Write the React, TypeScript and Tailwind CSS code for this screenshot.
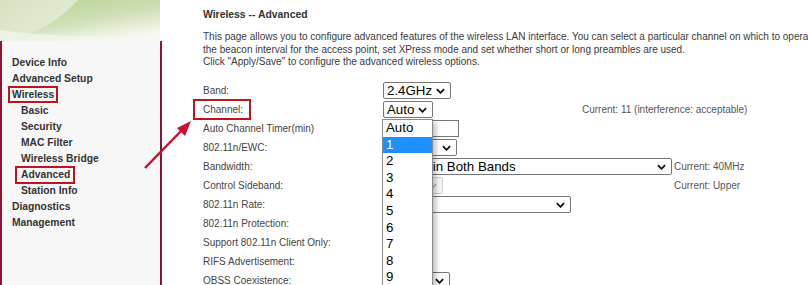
import React from 'react';

const navItems = [
    { label: 'Device Info', sub: false },
    { label: 'Advanced Setup', sub: false },
    { label: 'Wireless', sub: false, box: 'wireless' },
    { label: 'Basic', sub: true },
    { label: 'Security', sub: true },
    { label: 'MAC Filter', sub: true },
    { label: 'Wireless Bridge', sub: true },
    { label: 'Advanced', sub: true, box: 'advanced' },
    { label: 'Station Info', sub: true },
    { label: 'Diagnostics', sub: false },
    { label: 'Management', sub: false },
];

const channels = ['Auto', '1', '2', '3', '4', '5', '6', '7', '8', '9', '10', '11'];

function Chevron({ disabled }: { disabled?: boolean }) {
    return (
        <svg
            className="ml-auto mr-[5px] h-[6px] w-[9px] shrink-0"
            viewBox="0 0 10 6"
            fill="none"
            stroke={disabled ? '#b5b5b5' : '#111'}
            strokeWidth="2"
        >
            <path d="M1 1 L5 5 L9 1" />
        </svg>
    );
}

function Select({
    width,
    text,
    disabled,
    children,
}: {
    width: string;
    text?: string;
    disabled?: boolean;
    children?: React.ReactNode;
}) {
    return (
        <div className={`relative ${width}`}>
            <div
                className={`flex h-[17px] items-center rounded-[2px] border pl-[3px] font-['Liberation_Sans',Arial,sans-serif] text-[13.3px] leading-none ${
                    disabled
                        ? 'border-[#d0d0d0] bg-[#f7f7f7] text-[#9a9a9a]'
                        : 'border-[#767676] bg-white text-black'
                }`}
            >
                {text && <span className="whitespace-nowrap">{text}</span>}
                <Chevron disabled={disabled} />
            </div>
            {children}
        </div>
    );
}

function Row({
    label,
    boxed,
    children,
}: {
    label: string;
    boxed?: boolean;
    children?: React.ReactNode;
}) {
    return (
        <div className="flex h-[19px] items-center">
            <div className="w-[180px] shrink-0">
                <span className="relative">
                    {label}
                    {boxed && (
                        <span className="absolute -left-[10px] -right-[8px] -top-[5px] -bottom-[5px] border-2 border-[#c1121f]"></span>
                    )}
                </span>
            </div>
            <div className="flex items-center">{children}</div>
        </div>
    );
}

function Banner() {
    return (
        <svg className="block h-[41px] w-[162px]" viewBox="0 0 162 41">
            <defs>
                <linearGradient id="bg" x1="0" y1="0" x2="1" y2="0.4">
                    <stop offset="0" stopColor="#d5e3c1" />
                    <stop offset="0.6" stopColor="#e3ecd6" />
                    <stop offset="1" stopColor="#f6f9f1" />
                </linearGradient>
                <linearGradient id="sw" x1="0.3" y1="0" x2="0.9" y2="1">
                    <stop offset="0" stopColor="#bcd49b" />
                    <stop offset="0.45" stopColor="#cfe0b6" />
                    <stop offset="1" stopColor="#ffffff" />
                </linearGradient>
            </defs>
            <rect x="0" y="0" width="160" height="41" fill="url(#bg)" />
            <path d="M78 0 L160 0 L160 41 L8 41 C38 33 62 18 78 0 Z" fill="url(#sw)" />
            <path d="M0 30 C40 36 100 38 160 34 L160 41 L0 41 Z" fill="#f4f7ef" opacity="0.7" />
            <rect x="160" y="0" width="2" height="41" fill="#ffffff" />
        </svg>
    );
}

export default function App() {
    return (
        <div className="relative flex h-[285px] w-[808px] overflow-hidden bg-white font-['Liberation_Sans',Arial,sans-serif]">
            {/* Left menu */}
            <div className="flex w-[162px] shrink-0 flex-col">
                <Banner />
                <div className="flex-1 border-x-2 border-[#8a1538] bg-[#f7f7f7] pt-[14px]">
                    {navItems.map((item) => (
                        <div
                            key={item.label}
                            className={`h-[16px] text-[10.3px] font-bold leading-[16px] text-[#333] ${
                                item.sub ? 'pl-[19px]' : 'pl-[10px]'
                            }`}
                        >
                            <span className="relative">
                                {item.label}
                                {item.box === 'wireless' && (
                                    <span className="absolute -left-[4px] -right-[4px] -top-[3px] -bottom-[3px] border-2 border-[#c1121f]"></span>
                                )}
                                {item.box === 'advanced' && (
                                    <span className="absolute -left-[6px] -right-[5px] -top-[3px] -bottom-[4px] border-2 border-[#c1121f]"></span>
                                )}
                            </span>
                        </div>
                    ))}
                </div>
            </div>

            {/* Content */}
            <div className="flex-1 pl-[41px] pt-[9px] text-[10px] text-[#444]">
                <div className="text-[10.4px] font-bold leading-[12px] text-[#333]">
                    Wireless -- Advanced
                </div>
                <div className="mt-[10px] whitespace-nowrap leading-[12.5px] text-[#3a3a3a]">
                    <div>
                        This page allows you to configure advanced features of the wireless LAN interface. You can select a particular channel on which to operate, force the transmission rate to a particular speed, set the fragmentation threshold,
                    </div>
                    <div>
                        the beacon interval for the access point, set XPress mode and set whether short or long preambles are used.
                    </div>
                    <div>Click "Apply/Save" to configure the advanced wireless options.</div>
                </div>

                <div className="mt-[12.5px] whitespace-nowrap">
                    <Row label="Band:">
                        <Select width="w-[68px]" text="2.4GHz" />
                    </Row>
                    <Row label="Channel:" boxed>
                        <Select width="w-[50px]" text="Auto">
                            <div className="absolute left-[-1px] top-[18px] z-20 w-[51px] border border-[#8a8a8a] bg-white pt-[0px] shadow-[3px_3px_5px_rgba(0,0,0,0.25)]">
                                {channels.map((c) => (
                                    <div
                                        key={c}
                                        className={`h-[16.6px] pl-[3px] text-[13.3px] leading-[16.6px] ${
                                            c === '1' ? 'bg-[#1e8fff] text-white' : 'text-black'
                                        }`}
                                    >
                                        {c}
                                    </div>
                                ))}
                            </div>
                        </Select>
                        <span className="ml-[149px] text-[#555]">Current: 11 (interference: acceptable)</span>
                    </Row>
                    <Row label="Auto Channel Timer(min)">
                        <div className="h-[17px] w-[76px] border border-[#767676] bg-white"></div>
                    </Row>
                    <Row label="802.11n/EWC:">
                        <Select width="w-[74px]" />
                    </Row>
                    <Row label="Bandwidth:">
                        <Select width="w-[289px]" text="40MHz in Both Bands" />
                        <span className="ml-[2px] text-[#555]">Current: 40MHz</span>
                    </Row>
                    <Row label="Control Sideband:">
                        <Select width="w-[60px]" disabled />
                        <span className="ml-[231px] text-[#555]">Current: Upper</span>
                    </Row>
                    <Row label="802.11n Rate:">
                        <Select width="w-[188px]" />
                    </Row>
                    <Row label="802.11n Protection:">
                        <Select width="w-[49px]" />
                    </Row>
                    <Row label="Support 802.11n Client Only:">
                        <Select width="w-[49px]" />
                    </Row>
                    <Row label="RIFS Advertisement:">
                        <Select width="w-[49px]" />
                    </Row>
                    <Row label="OBSS Coexistence:">
                        <Select width="w-[67px]" />
                    </Row>
                </div>
            </div>

            {/* Annotation arrow */}
            <svg
                className="pointer-events-none absolute left-0 top-0 h-[285px] w-[808px]"
                viewBox="0 0 808 285"
            >
                <line x1="145" y1="168" x2="182" y2="130" stroke="#c8102e" strokeWidth="2.5" />
                <polygon points="191,121 177,128 185,136" fill="#c8102e" />
            </svg>
        </div>
    );
}
